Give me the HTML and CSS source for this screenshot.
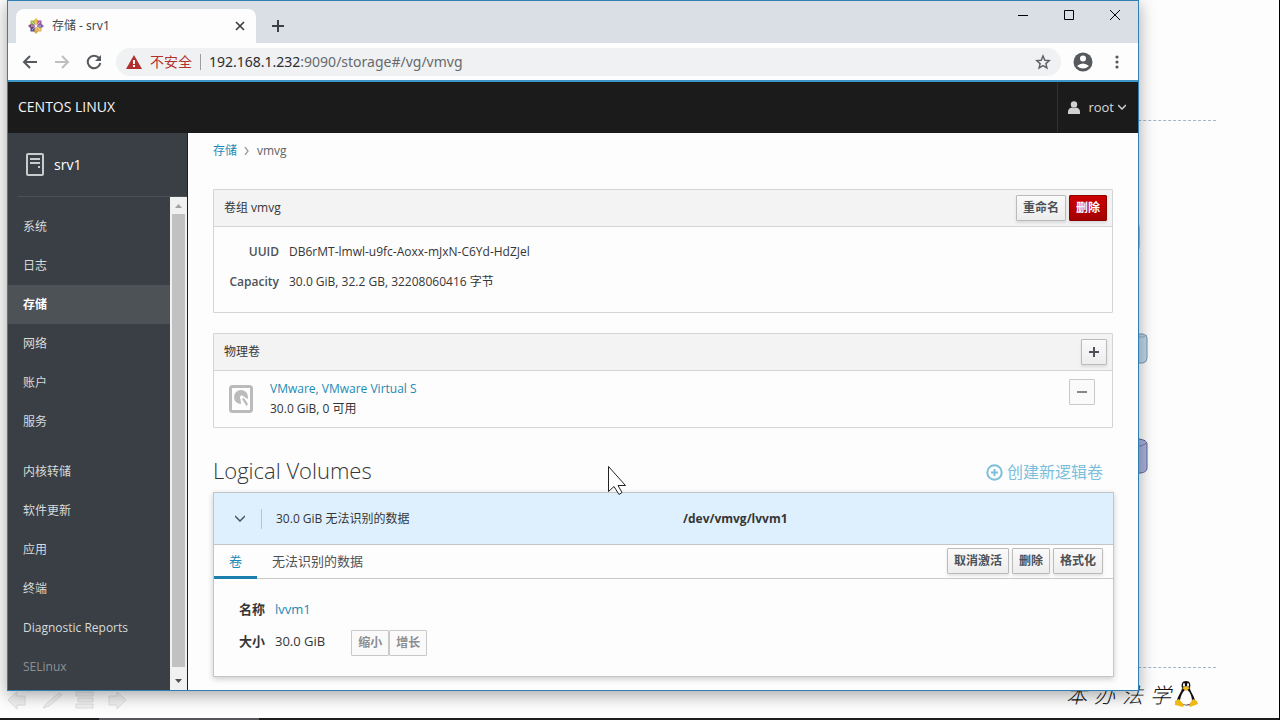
FILE: index.html
```html
<!DOCTYPE html>
<html lang="zh-CN">
<head>
<meta charset="utf-8">
<title>存储 - srv1</title>
<link rel="stylesheet" href="styles.css">
</head>
<body>
<div class="desktop">
  <div class="dash dash-top"></div>
  <div class="dash dash-bottom"></div>
  <svg class="cylinder cylinder-sliver" width="5" height="28" viewBox="0 0 5 28"><path d="M0 0q2 2 2 5v18q0 3-2 5z" fill="#6f9fcb"/></svg>
  <svg class="cylinder cylinder-blue" width="20" height="34" viewBox="0 0 20 34"><path d="M0 2h14q4 1 4 4v20q0 4-4 5H0z" fill="#bdd5e8" stroke="#7595ad"/><path d="M0 5h14l4-2" fill="none" stroke="#8faabf"/></svg>
  <svg class="cylinder cylinder-violet" width="20" height="38" viewBox="0 0 20 38"><path d="M0 2h10q8 1 8 5v24q0 4-6 5H0z" fill="#a8b2da" stroke="#5a6496"/><path d="M0 9h12l6-3" fill="none" stroke="#6f79a9"/></svg>
  <svg class="slide-tools" width="122" height="22" viewBox="0 0 122 22" fill="#f1f1f1" stroke="#dedede">
    <path d="M2 11l9-8v4h8v9h-8v4z"/><path d="M37 19l3-4L53 4l3 2-13 11z"/><path d="M70 3h17v4H70zM72 9h15v4H72zM70 15h17v4H70z"/><path d="M120 11l-9-8v4h-8v9h8v4z"/>
  </svg>
  <div class="signature"><span>本</span><span>办</span><span>法</span><span>学</span>
    <svg width="24" height="28" viewBox="0 0 24 28">
      <path d="M12 1c-4 0-5 3-4 7 0 4-5 8-5 14 2 4 16 5 18 0 0-6-5-10-5-14 1-4 0-7-4-7z" fill="#111"/>
      <path d="M12 9c-3 2-6 8-6 12 1 5 11 5 12 0 0-4-2-10-6-12z" fill="#fff"/>
      <ellipse cx="10" cy="5" rx="1" ry="2" fill="#fff"/><ellipse cx="14" cy="5" rx="1" ry="2" fill="#fff"/>
      <path d="M8 8l4-2 4 2-4 3zM1 21l4-2 5 6-1 2-8-2zM23 21l-4-2-4 6 1 2 8-3z" fill="#efb815"/>
    </svg>
  </div>
  <div class="taskbar"><i></i></div>
  <div class="screen-edge"></div>

  <div class="window">
    <header class="titlebar">
      <div class="tab">
        <svg width="16" height="16" viewBox="0 0 16 16">
          <path d="M8 0l2.500 3v4h-5V3z" fill="#e9b53a"/><path d="M16 8l-3 2.500H9v-5h4z" fill="#7b62ad"/><path d="M8 16l-2.500-3V9h5v4z" fill="#dfa13c"/><path d="M0 8l3-2.500h4v5H3z" fill="#8b4f86"/>
          <path d="M2.500 2.500h4v4h-4z" fill="#9cbd4c"/><path d="M9.500 2.500h4v4h-4z" fill="#a45aa0"/><path d="M9.500 9.500h4v4h-4z" fill="#e3b558"/><path d="M2.500 9.500h4v4h-4z" fill="#514f91"/>
          <path d="M8 3v10M3 8h10M4 4l8 8M12 4l-8 8" stroke="#f4eef5" stroke-width=".6"/>
        </svg>
        <span class="tab-title">存储 - srv1</span>
        <button class="icon-btn" aria-label="关闭标签页"><svg width="10" height="10" viewBox="0 0 10 10" stroke="#3c4043" stroke-width="1.700"><path d="M1 1l8 8M9 1L1 9"/></svg></button>
      </div>
      <button class="icon-btn new-tab" aria-label="新标签页"><svg width="12" height="12" viewBox="0 0 12 12" stroke="#3c4043" stroke-width="2"><path d="M6 0v12M0 6h12"/></svg></button>
      <div class="win-controls">
        <button class="icon-btn" aria-label="最小化"><svg width="10" height="10" viewBox="0 0 10 10" stroke="#000"><path d="M0 5.500h10"/></svg></button>
        <button class="icon-btn" aria-label="最大化"><svg width="10" height="10" viewBox="0 0 10 10" stroke="#000" fill="none"><path d="M.5.5h9v9h-9z"/></svg></button>
        <button class="icon-btn" aria-label="关闭"><svg width="10" height="10" viewBox="0 0 10 10" stroke="#000"><path d="M0 0l10 10M10 0L0 10"/></svg></button>
      </div>
    </header>

    <div class="toolbar">
      <button class="icon-btn" aria-label="后退"><svg width="16" height="16" viewBox="0 0 16 16" fill="none" stroke="#55585c" stroke-width="2"><path d="M15 8H2M8 2L2 8l6 6"/></svg></button>
      <button class="icon-btn" aria-label="前进"><svg width="16" height="16" viewBox="0 0 16 16" fill="none" stroke="#bcbec0" stroke-width="2"><path d="M1 8h13M8 2l6 6-6 6"/></svg></button>
      <button class="icon-btn" aria-label="重新加载"><svg width="16" height="16" viewBox="0 0 16 16"><path d="M13 4a6.300 6.300 0 1 0 1.300 5" fill="none" stroke="#55585c" stroke-width="2"/><path d="M15 1v6H9z" fill="#55585c"/></svg></button>
      <div class="omnibox">
        <svg width="16" height="14" viewBox="0 0 16 14"><path d="M8 0l8 14H0z" fill="#b3312c"/><path d="M7 5h2v4H7zM7 10h2v2H7z" fill="#fff"/></svg>
        <span class="insecure">不安全</span>
        <span class="url"><b>192.168.1.232</b>:9090/storage#/vg/vmvg</span>
        <button class="icon-btn" aria-label="收藏"><svg width="16" height="16" viewBox="0 0 16 16" fill="none" stroke="#5f6368" stroke-width="1.500"><path d="M8 2l1.800 4.200 4.500.4-3.400 3 1 4.400L8 11.700 4.100 14l1-4.400-3.400-3 4.500-.4z"/></svg></button>
      </div>
      <button class="icon-btn avatar" aria-label="用户"><svg width="20" height="20" viewBox="0 0 20 20"><circle cx="10" cy="10" r="9.500" fill="#55585c"/><circle cx="10" cy="6.500" r="3" fill="#fff"/><path d="M4 14q6-5 12 0-6 5-12 0z" fill="#fff"/></svg></button>
      <button class="icon-btn" aria-label="菜单"><svg width="16" height="16" viewBox="0 0 16 16" fill="#55585c"><circle cx="8" cy="3" r="1.600"/><circle cx="8" cy="8" r="1.600"/><circle cx="8" cy="13" r="1.600"/></svg></button>
    </div>

    <div class="masthead">
      <span class="brand">CENTOS LINUX</span>
      <button class="user">
        <svg width="12" height="13" viewBox="0 0 12 13" fill="#d1d1d1"><circle cx="6" cy="3.500" r="3.200"/><path d="M0 13V11q0-4 4-4.500 2 1.500 4 0 4 .5 4 4.500v2z"/></svg>
        <span>root</span>
        <svg width="8" height="6" viewBox="0 0 8 6" fill="none" stroke="#d1d1d1" stroke-width="1.500"><path d="M0 1l4 4 4-4"/></svg>
      </button>
    </div>

    <div class="app">
      <aside class="sidebar">
        <div class="host">
          <svg width="18" height="23" viewBox="0 0 18 23" fill="none" stroke="#c8cacc"><rect x="1" y="1" width="16" height="21" rx="1" stroke-width="2"/><path d="M4 6h10M4 10h10" stroke-width="2"/><path d="M12 13h2v2h-2z" fill="#c8cacc" stroke="none"/></svg>
          <span>srv1</span>
        </div>
        <div class="nav-area">
          <nav>
            <a href="#">系统</a>
            <a href="#">日志</a>
            <a href="#" class="active">存储</a>
            <a href="#">网络</a>
            <a href="#">账户</a>
            <a href="#">服务</a>
            <a href="#" class="group">内核转储</a>
            <a href="#">软件更新</a>
            <a href="#">应用</a>
            <a href="#">终端</a>
            <a href="#">Diagnostic Reports</a>
            <a href="#" class="faded">SELinux</a>
          </nav>
          <div class="scrollbar">
            <svg width="17" height="17" viewBox="0 0 17 17"><path d="M5 11l3.500-4 3.500 4z" fill="#a3a3a3"/></svg>
            <i></i>
            <svg width="17" height="23" viewBox="0 0 17 23"><path d="M5 12l3.500 4 3.500-4z" fill="#505050"/></svg>
          </div>
        </div>
      </aside>

      <main>
        <div class="breadcrumb"><a href="#">存储</a><svg width="5" height="8" viewBox="0 0 5 8" fill="none" stroke="#9c9c9c" stroke-width="1.300"><path d="M1 0l3 4-3 4"/></svg><span>vmvg</span></div>

        <section class="panel">
          <div class="panel-head"><span>卷组 vmvg</span>
            <div class="actions"><button class="btn">重命名</button><button class="btn danger">删除</button></div>
          </div>
          <dl class="info">
            <dt>UUID</dt><dd>DB6rMT-lmwl-u9fc-Aoxx-mJxN-C6Yd-HdZJel</dd>
            <dt>Capacity</dt><dd>30.0 GiB, 32.2 GB, 32208060416 字节</dd>
          </dl>
        </section>

        <section class="panel">
          <div class="panel-head"><span>物理卷</span>
            <button class="btn square" aria-label="添加"><svg width="10" height="10" viewBox="0 0 10 10" fill="#4d5258"><path d="M4 0h2v4h4v2H6v4H4V6H0V4h4z"/></svg></button>
          </div>
          <div class="disk">
            <svg width="24" height="28" viewBox="0 0 24 28"><rect x="1.500" y="1.500" width="21" height="25" rx="2" fill="none" stroke="#bbb" stroke-width="3"/><path d="M12 19a7 7 0 1 1 7-7q0 1-.5 2L14 11q-1-1-2-.5-2 1.500-.5 3.500z" fill="#bbb"/><path d="M13 14l2-1 4 6-1.500 2z" fill="#bbb"/></svg>
            <div class="disk-text"><a href="#">VMware, VMware Virtual S</a><span>30.0 GiB, 0 可用</span></div>
            <button class="btn square muted" aria-label="移除"><svg width="10" height="10" viewBox="0 0 10 10"><path d="M0 4h10v2H0z" fill="#85888b"/></svg></button>
          </div>
        </section>

        <div class="lv-title">
          <h2>Logical Volumes</h2>
          <a href="#"><svg width="17" height="17" viewBox="0 0 17 17" fill="none" stroke="#7cbfdb" stroke-width="2"><circle cx="8.500" cy="8.500" r="7.200"/><path d="M8.500 5v7M5 8.500h7"/></svg><span>创建新逻辑卷</span></a>
        </div>

        <section class="lv">
          <div class="lv-row">
            <button class="icon-btn" aria-label="折叠"><svg width="10" height="7" viewBox="0 0 10 7" fill="none" stroke="#4d5258" stroke-width="1.500"><path d="M0 1l5 5 5-5"/></svg></button>
            <div class="lv-cols"><span>30.0 GiB 无法识别的数据</span><strong>/dev/vmvg/lvvm1</strong></div>
          </div>
          <div class="lv-tabs">
            <a href="#" class="on">卷</a><a href="#">无法识别的数据</a>
            <div class="actions"><button class="btn">取消激活</button><button class="btn">删除</button><button class="btn">格式化</button></div>
          </div>
          <dl class="lv-body">
            <dt>名称</dt><dd><a href="#">lvvm1</a></dd>
            <dt>大小</dt><dd>30.0 GiB<span class="sizes"><button class="btn muted">缩小</button><button class="btn muted">增长</button></span></dd>
          </dl>
        </section>
      </main>
    </div>
  </div>

  <svg class="cursor" width="20" height="32" viewBox="0 0 20 32"><path d="M1.500 1.500v25l5.500-5 5 8 3-2-4-7h7.500z" fill="#fff" stroke="#222"/></svg>
</div>
</body>
</html>
```
FILE: styles.css
```css
* { box-sizing: border-box; }
body {
  margin: 0;
  font: 12px/20px "Open Sans", "Noto Sans CJK SC", sans-serif;
  color: #363636;
}
a { color: #1b8ab5; text-decoration: none; }
button { font: inherit; color: inherit; margin: 0; padding: 0; cursor: pointer; }
svg { display: block; flex: none; }
dl, dd, h2 { margin: 0; }

/* slide behind the window */
.desktop { position: relative; height: 100vh; min-height: 480px; overflow: hidden; background: #fdfdfd; }
.dash { position: absolute; left: 50%; right: 64px; border-top: 1px dashed #a3b7c8; }
.dash-top { top: 120px; }
.dash-bottom { bottom: 52px; }
.cylinder { position: absolute; }
.cylinder-sliver { right: 137px; top: 223px; opacity: .6; }
.cylinder-blue { right: 131px; top: 332px; }
.cylinder-violet { right: 131px; top: 437px; }
.slide-tools { position: absolute; left: 6px; bottom: 9px; }
.signature {
  position: absolute; right: 82px; bottom: 12px;
  display: flex; align-items: center; gap: 7px;
  font: italic 300 21px/28px "Noto Sans CJK SC", sans-serif; color: #111;
}
.signature svg { margin-left: -4px; }
.taskbar { position: absolute; left: 0; right: 0; bottom: 0; height: 2px; background: #1d1d20; }
.taskbar i { display: block; width: 160px; height: 2px; margin-left: 99px; background: #56565a; }
.screen-edge { position: absolute; right: 0; top: 0; bottom: 0; width: 1px; background: #000; }

/* browser window */
.window {
  position: absolute; inset: 0 141px 29px 7px;
  display: flex; flex-direction: column;
  border: 1px solid #2f7fb5; background: #fdfdfd;
  box-shadow: 0 4px 16px rgba(0, 0, 0, .35);
}
.icon-btn { display: flex; align-items: center; justify-content: center; border: 0; background: none; }
.titlebar { display: flex; flex: none; height: 42px; padding-left: 8px; background: #dadee5; }
.tab {
  display: flex; align-items: center; width: 240px; height: 34px; margin-top: 8px;
  padding: 0 11px 0 12px; border-radius: 8px 8px 0 0; background: #fdfdfd;
}
.tab-title { flex: 1; margin-left: 8px; color: #45484c; font-family: "Noto Sans", "Noto Sans CJK SC", sans-serif; }
.new-tab { width: 28px; height: 28px; margin: 11px 0 0 8px; }
.win-controls { display: flex; margin-left: auto; }
.win-controls .icon-btn { width: 46px; height: 28px; }
.toolbar {
  display: flex; flex: none; align-items: center; gap: 16px; height: 39px;
  padding: 0 13px 0 14px; border-bottom: 2px solid #3c97c7;
}
.omnibox {
  display: flex; flex: 1; align-items: center; height: 28px; margin-left: -2px;
  padding: 0 10px; border-radius: 14px; background: #eff1f3; font-size: 14px;
  font-family: "Noto Sans", "Noto Sans CJK SC", sans-serif;
}
.insecure { margin-left: 8px; padding-right: 8px; line-height: 16px; color: #b3312c; border-right: 1px solid #9a9da1; }
.url { flex: 1; margin-left: 8px; color: #666a6e; }
.url b { font-weight: 400; color: #2b2d30; }
.avatar { margin-left: -4px; }

/* application frame */
.masthead {
  display: flex; flex: none; align-items: stretch; justify-content: space-between;
  height: 51px; padding-bottom: 1px; background: #1b1b1b; color: #f5f5f5; font-size: 13px;
}
.brand { align-self: center; padding-left: 10px; font-size: 14px; }
.user {
  display: flex; align-items: center; gap: 8px; padding: 0 12px 0 10px;
  border: 0; border-left: 1px solid #303030; background: none; color: #d8d8d8;
}
.user svg:last-child { margin-left: -4px; }
.app { display: flex; flex: 1; min-height: 0; }
.sidebar {
  display: flex; flex: none; flex-direction: column; width: 180px;
  background: #393f44; border-right: 1px solid #1d2023; color: #d8dadb;
}
.host {
  display: flex; flex: none; align-items: center; gap: 10px; height: 64px; margin-left: 10px; padding-left: 8px;
  border-bottom: 1px solid #4b5157; font-size: 14px; color: #fff;
}
.nav-area { display: flex; flex: 1; min-height: 0; }
nav { flex: 1; overflow: hidden; padding-top: 10px; }
nav a { display: block; height: 39px; padding-left: 15px; line-height: 40px; color: #d8dadb; }
nav .active { background: #4d5257; color: #fff; font-weight: 700; }
nav .group { margin-top: 11px; }
nav .faded { color: #8d9195; }
.scrollbar { display: flex; flex: none; flex-direction: column; width: 17px; background: #f1f1f1; }
.scrollbar i { flex: 1; margin: 0 2px; background: #c1c1c1; }

main { flex: 1; min-width: 0; padding: 8px 25px 0; overflow: hidden; }
.breadcrumb { display: flex; align-items: center; gap: 7px; margin-bottom: 28px; color: #636363; }
.breadcrumb span { margin-left: 1px; }
.panel { margin-bottom: 20px; border: 1px solid #d5d5d5; border-radius: 1px; }
.panel-head {
  display: flex; align-items: center; justify-content: space-between; height: 37px;
  padding: 0 5px 0 10px; background: #f3f3f3; border-bottom: 1px solid #d5d5d5;
}
.actions { display: flex; gap: 3px; }
.btn {
  display: flex; align-items: center; justify-content: center; height: 26px; padding: 0 6px;
  border: 1px solid #bbb; border-radius: 1px; color: #4d5258; font-weight: 700;
  background: linear-gradient(#fafafa, #ededed); box-shadow: 0 2px 3px rgba(3, 3, 3, .1);
}
.danger { border-color: #8b0000; background: linear-gradient(#c00, #a30000); color: #fff; }
.square { width: 26px; }
.muted { border-color: #c9c9c9; background: #fafafa; color: #8b8d8f; box-shadow: none; }
.info { display: grid; grid-template-columns: 65px 1fr; column-gap: 10px; padding: 10px 0 15px; line-height: 30px; }
.info dt { text-align: right; font-weight: 600; color: #4d5258; }
.disk { display: flex; align-items: center; padding: 8px 17px 8px 15px; }
.disk-text { display: flex; flex: 1; flex-direction: column; margin-left: 17px; }
.disk .btn { align-self: flex-start; }

.lv-title { display: flex; align-items: center; justify-content: space-between; height: 44px; padding-right: 10px; }
h2 { font-size: 22px; font-weight: 300; line-height: 28px; }
.lv-title a { display: flex; align-items: center; gap: 4px; padding-top: 4px; font-size: 16px; color: #7cbfdb; }
.lv { margin-right: -1px; border: 1px solid #c2c6c9; box-shadow: 0 2px 6px rgba(3, 3, 3, .2); }
.lv-row { display: flex; align-items: center; height: 52px; background: #def0fd; border-bottom: 1px solid #c2c6c9; }
.lv-row .icon-btn { width: 48px; height: 20px; padding-left: 4px; border-right: 1px solid #b9c4cc; }
.lv-cols { display: grid; flex: 1; grid-template-columns: 1fr 1fr; padding: 0 23px 0 14px; }
.lv-tabs { display: flex; height: 34px; padding-right: 10px; border-bottom: 1px solid #c8c8c8; font-size: 13px; }
.lv-tabs > a { height: 34px; padding: 0 15px; line-height: 32px; color: #4d5258; }
.lv-tabs > .on { color: #1b8ab5; border-bottom: 3px solid #1b7fae; }
.lv-tabs .actions { align-items: center; height: 32px; margin-left: auto; font-size: 12px; }
.lv-body {
  display: grid; grid-template-columns: 26px 1fr; column-gap: 10px; padding: 14px 25px 19px;
  font-size: 13px; line-height: 32px;
}
.lv-body dt { font-weight: 600; }
.lv-body dd { display: flex; align-items: center; min-height: 32px; }
.sizes { display: flex; margin-left: 26px; padding-top: 3px; font-size: 12px; line-height: 20px; }

.cursor { position: absolute; left: 607px; top: 465px; }
```
